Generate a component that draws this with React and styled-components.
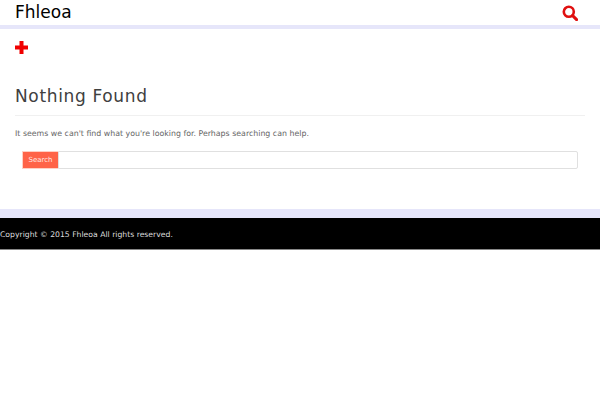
import { createGlobalStyle } from 'styled-components';
import styled from 'styled-components';

const GlobalStyle = createGlobalStyle`
  body {
    margin: 0;
    background: #fff;
    font-family: "DejaVu Sans", sans-serif;
  }
`;

const Header = styled.header`
  height: 25px;
  padding: 0 15px;
  display: flex;
  align-items: center;
  justify-content: space-between;
  border-bottom: 4px solid #e6e6fa;
`;

const Logo = styled.div`
  font-size: 17px;
  line-height: 25px;
  color: #000;
`;

const SearchIcon = styled.svg`
  width: 16px;
  height: 16px;
  margin-right: 7px;
  display: block;
`;

const Main = styled.main`
  padding: 12px 15px 0;
  height: 168px;
`;

const Plus = styled.svg`
  width: 13px;
  height: 13px;
  display: block;
`;

const Title = styled.h1`
  margin: 29px 0 0;
  padding-bottom: 5px;
  font-size: 17px;
  line-height: 27px;
  font-weight: 400;
  letter-spacing: 0.65px;
  color: #404040;
  border-bottom: 1px solid #f0f0f0;
`;

const Message = styled.p`
  margin: 11px 0 0;
  font-size: 7.85px;
  line-height: 13px;
  color: #666;
`;

const SearchForm = styled.form`
  display: flex;
  margin: 11px 7px 0;
  height: 18px;
`;

const SearchButton = styled.button`
  width: 36px;
  padding: 0;
  border: 1px solid #ffd0c4;
  border-right: 0;
  background: #ff6347;
  color: #ffe8e2;
  font-family: inherit;
  font-size: 7px;
`;

const SearchInput = styled.input`
  flex: 1;
  min-width: 0;
  box-sizing: border-box;
  border: 1px solid #e0e0e0;
  border-radius: 0 2px 2px 0;
  background: #fff;
  outline: 0;
`;

const FooterBand = styled.div`
  height: 9px;
  background: #e6e6fa;
`;

const Footer = styled.footer`
  height: 32px;
  background: #000;
  color: #ddd;
  font-size: 7.7px;
  line-height: 33px;
  border-bottom: 1px solid #888;
  box-sizing: border-box;
`;

export default function App() {
  return (
    <>
      <GlobalStyle />
      <Header>
        <Logo>Fhleoa</Logo>
        <SearchIcon viewBox="0 0 16 16" fill="none" stroke="#e01010">
          <circle cx="6.8" cy="6.8" r="5" strokeWidth="2.6" />
          <path d="M10.6 10.6 L14.6 14.6" strokeWidth="3" strokeLinecap="round" />
        </SearchIcon>
      </Header>
      <Main>
        <Plus viewBox="0 0 13 13">
          <path d="M4.5 0h4v4.5h4.5v4h-4.5v4.5h-4v-4.5h-4.5v-4h4.5z" fill="#f00000" />
        </Plus>
        <Title>Nothing Found</Title>
        <Message>It seems we can't find what you're looking for. Perhaps searching can help.</Message>
        <SearchForm onSubmit={(e) => e.preventDefault()}>
          <SearchButton type="submit">Search</SearchButton>
          <SearchInput type="text" />
        </SearchForm>
      </Main>
      <FooterBand />
      <Footer>Copyright © 2015 Fhleoa All rights reserved.</Footer>
    </>
  );
}
